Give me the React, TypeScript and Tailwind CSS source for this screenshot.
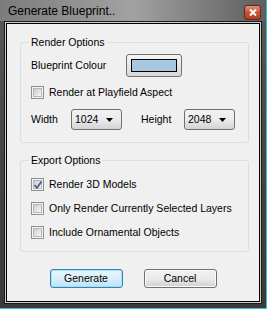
import React from "react";

const font = { fontFamily: '"Liberation Sans", Arial, sans-serif' };

function CheckBox({ checked }: { checked?: boolean }) {
  return (
    <span className="relative flex h-[13px] w-[13px] shrink-0 border border-[#8e8f8f] bg-[#f4f4f4] p-[1px]">
      <span className="flex-1 border border-[#b4b8bd] bg-linear-to-br from-[#c9cdd3] to-[#f7f7f7]" />
      {checked && (
        <svg className="absolute left-[1px] top-[1px]" width="10" height="10" viewBox="0 0 10 10">
          <path d="M1.5 5 L4 7.8 L8.5 1.5" fill="none" stroke="#4a5f8f" strokeWidth="1.8" />
        </svg>
      )}
    </span>
  );
}

function CheckRow({ label, checked }: { label: string; checked?: boolean }) {
  return (
    <div className="flex h-[13px] items-center gap-[5px]">
      <CheckBox checked={checked} />
      <span className="text-[10.5px] leading-none text-black">{label}</span>
    </div>
  );
}

function Select({ value }: { value: string }) {
  return (
    <div className="flex h-[21px] w-[51px] items-center justify-between rounded-[3px] border border-[#707070] bg-linear-to-b from-[#f2f2f2] via-[#ebebeb] to-[#d4d4d4] pl-[3px] pr-[8px]">
      <span className="text-[10.5px] leading-none">{value}</span>
      <svg width="7" height="4" viewBox="0 0 7 4">
        <path d="M0 0 H7 L3.5 4 Z" fill="#000" />
      </svg>
    </div>
  );
}

function Group({ title, className, children }: { title: string; className?: string; children: React.ReactNode }) {
  return (
    <div className={"relative rounded-[3px] border border-[#d5dfe5] " + (className ?? "")}>
      <span className="absolute -top-[7px] left-[8px] bg-[#f0f0f0] px-[2px] text-[10.5px] leading-[13px]">{title}</span>
      {children}
    </div>
  );
}

function Btn({ label, primary }: { label: string; primary?: boolean }) {
  return (
    <div
      className={
        "flex h-[19px] w-[73px] items-center justify-center rounded-[3px] border text-[10.5px] leading-none " +
        (primary
          ? "border-[#3c7fb1] bg-linear-to-b from-[#e8f5fc] via-[#d9effb] to-[#bde3f7] shadow-[inset_0_0_0_1px_#9fe0fa]"
          : "border-[#707070] bg-linear-to-b from-[#f2f2f2] via-[#ebebeb] to-[#d0d0d0] shadow-[inset_0_0_0_1px_#fcfcfc]")
      }
    >
      {label}
    </div>
  );
}

export default function App() {
  return (
    <div
      style={font}
      className="flex h-[309px] w-[267px] flex-col border-r border-b border-[#36c2d6] bg-linear-to-b from-[#5a5a5a] via-[#454545] to-[#3a3a3a]"
    >
      {/* title bar */}
      <div className="flex h-[21px] items-center justify-between bg-linear-to-r from-[#7c7c7c] via-[#a2a2a2] to-[#5e5e5e] pl-[8px] pr-[5px]">
        <span className="text-[12px] leading-none text-black">Generate Blueprint..</span>
        <div className="mt-[5px] flex h-[15px] w-[17px] items-center justify-center self-start rounded-[3px] border border-[#5b2a20] bg-linear-to-b from-[#e0907a] via-[#c9533a] to-[#b63a22]">
          <svg width="8" height="7" viewBox="0 0 8 7">
            <path d="M1 0.5 L7 6.5 M7 0.5 L1 6.5" stroke="#fff" strokeWidth="2" />
          </svg>
        </div>
      </div>

      {/* client */}
      <div className="mx-[4px] border border-[#1a1a1a]">
        <div className="border border-[#cfcfcf]">
          <div className="flex h-[279px] flex-col border border-black bg-[#f0f0f0] pl-[13px] pr-[10px] pt-[18px] text-black">
            <Group title="Render Options" className="flex h-[101px] flex-col pl-[10px] pt-[11px]">
              <div className="flex h-[23px] items-center">
                <span className="w-[95px] text-[10.5px] leading-none">Blueprint Colour</span>
                <div className="flex h-[23px] w-[56px] rounded-[3px] border border-[#707070] bg-linear-to-b from-[#f4f4f4] to-[#d8d8d8] px-[4px] py-[4px]">
                  <div className="flex-1 border border-black bg-[#a6c8e0]" />
                </div>
              </div>
              <div className="mt-[9px]">
                <CheckRow label="Render at Playfield Aspect" />
              </div>
              <div className="mt-[10px] flex h-[21px] items-center">
                <span className="w-[40px] text-[10.5px] leading-none">Width</span>
                <Select value="1024" />
                <span className="ml-[19px] w-[43px] text-[10.5px] leading-none">Height</span>
                <Select value="2048" />
              </div>
            </Group>

            <Group title="Export Options" className="mt-[17px] flex h-[92px] flex-col gap-[11px] pl-[10px] pt-[17px]">
              <CheckRow label="Render 3D Models" checked />
              <CheckRow label="Only Render Currently Selected Layers" />
              <CheckRow label="Include Ornamental Objects" />
            </Group>

            <div className="-ml-[3px] mt-[17px] flex justify-center gap-[21px]">
              <Btn label="Generate" primary />
              <Btn label="Cancel" />
            </div>
          </div>
        </div>
      </div>
    </div>
  );
}
